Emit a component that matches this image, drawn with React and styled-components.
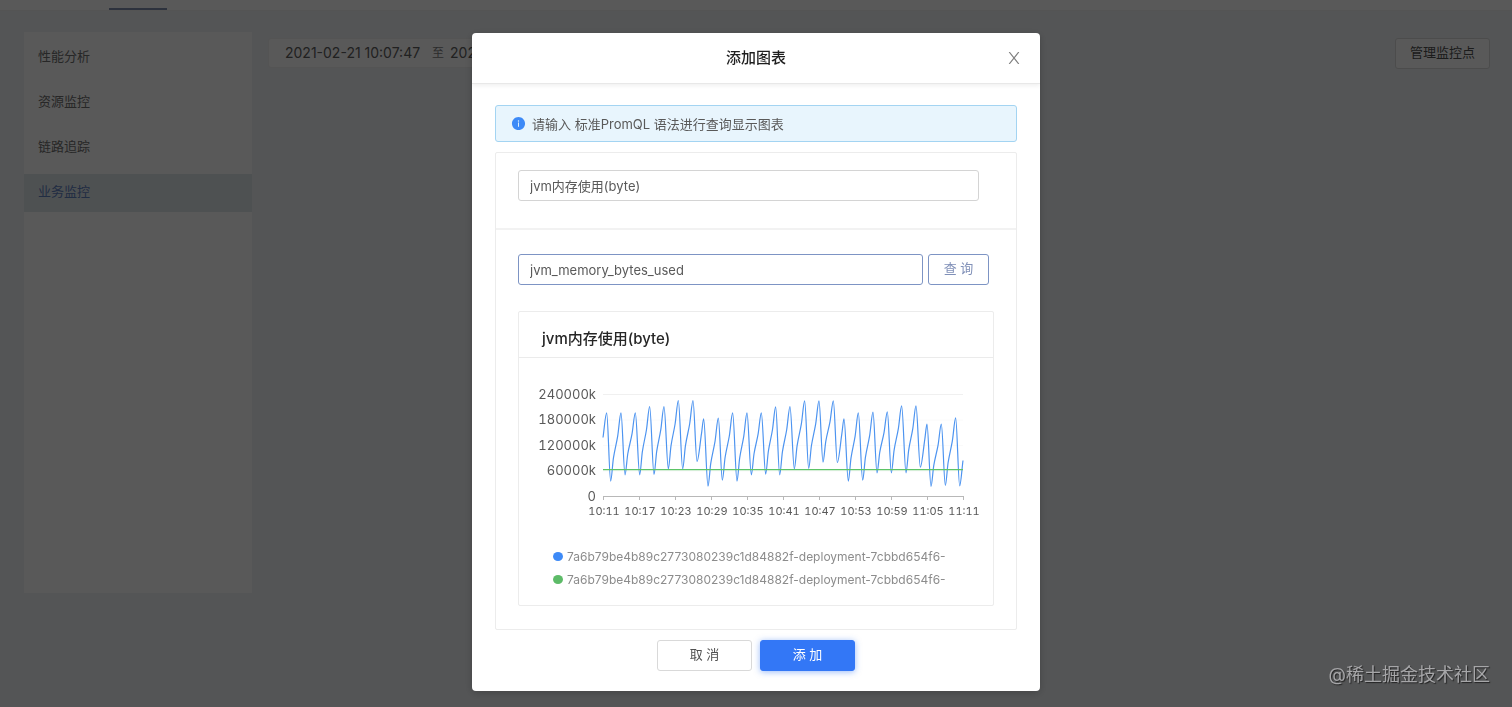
import React, { useState } from "react";
import styled, { createGlobalStyle } from "styled-components";
import { AiFillInfoCircle } from "react-icons/ai";

const GlobalStyle = createGlobalStyle`
  * {
    box-sizing: border-box;
  }

  body {
    margin: 0;
    background: #f0f2f5;
    color: #595959;
    font-family: Inter, "Noto Sans CJK SC", sans-serif;
    font-size: 13px;
    line-height: 20px;
  }

  button,
  input {
    font: inherit;
    color: inherit;
  }
`;

const TopBar = styled.header`
  display: flex;
  height: 11px;
  padding-left: 109px;
  background: #fff;
  border-bottom: 1px solid #f0f0f0;
`;

const ActiveTab = styled.div`
  width: 58px;
  border-bottom: 2px solid #8090b0;
`;

const Page = styled.div`
  display: flex;
  gap: 16px;
  padding: 21px 22px 0 24px;
`;

const Sidebar = styled.nav`
  display: flex;
  flex-direction: column;
  gap: 7px;
  flex: 0 0 228px;
  height: calc(100vh - 146px);
  padding-top: 7px;
  background: #fff;
`;

const MenuLink = styled.a`
  padding: 7px 14px 11px;
  color: ${(props) => (props.$active ? "#6080c0" : "#707070")};
  background: ${(props) => (props.$active ? "#e0e8ec" : "transparent")};
  text-decoration: none;
`;

const Toolbar = styled.div`
  display: flex;
  flex: 1;
  justify-content: space-between;
  align-items: flex-start;
  padding-top: 6px;
`;

const RangePicker = styled.div`
  display: flex;
  align-items: center;
  gap: 6px;
  height: 30px;
  padding: 0 16px;
  background: #fff;
  border: 1px solid #f0f0f0;
  border-radius: 3px;
  color: #808080;
  font-size: 12px;
`;

const DateInput = styled.input`
  width: 141px;
  padding: 0;
  border: 0;
  outline: none;
  background: none;
  color: #606060;
  font-size: 14px;
`;

const Button = styled.button`
  height: 31px;
  padding: 0 14px 3px;
  color: ${(props) => (props.$primary ? "#fff" : "#505050")};
  background: ${(props) => (props.$primary ? "#3377f6" : "#fff")};
  border: 1px solid ${(props) => (props.$primary ? "#3377f6" : "#d9d9d9")};
  border-radius: 3px;
  box-shadow: ${(props) => (props.$primary ? "0 1px 6px rgba(51, 119, 246, 0.5)" : "none")};
  cursor: pointer;
`;

const QueryButton = styled(Button)`
  flex: 0 0 61px;
  color: #8090b8;
  border-color: #7d94c4;
`;

const FooterButton = styled(Button)`
  width: 95px;
`;

const Mask = styled.div`
  position: fixed;
  inset: 0;
  display: flex;
  justify-content: center;
  align-items: flex-start;
  padding-top: 33px;
  overflow: auto;
  background: rgba(0, 0, 0, 0.65);
`;

const Dialog = styled.section`
  width: 568px;
  max-width: 100%;
  background: #fff;
  border-radius: 4px;
  box-shadow: 0 2px 8px rgba(0, 0, 0, 0.2);
`;

const DialogHeader = styled.header`
  display: grid;
  grid-template-columns: 40px 1fr 40px;
  align-items: center;
  height: 51px;
  padding: 0 6px;
  border-bottom: 1px solid #e8e8e8;
  box-shadow: 0 2px 4px rgba(0, 0, 0, 0.06);
`;

const DialogTitle = styled.h2`
  grid-column: 2;
  margin: 0;
  color: #1f1f1f;
  font-size: 15px;
  font-weight: 500;
  text-align: center;
`;

const CloseButton = styled.button`
  display: flex;
  justify-content: center;
  padding: 4px;
  background: none;
  border: 0;
  color: #808080;
  cursor: pointer;
`;

const DialogBody = styled.div`
  display: flex;
  flex-direction: column;
  gap: 10px;
  padding: 21px 23px 20px;
`;

const Alert = styled.div`
  display: flex;
  align-items: center;
  gap: 6px;
  height: 37px;
  padding: 0 15px;
  background: #e8f5fd;
  border: 1px solid #a3d4f2;
  border-radius: 3px;

  svg {
    color: #3d8af7;
    font-size: 15px;
  }
`;

const Card = styled.div`
  border: 1px solid #ececec;
  border-radius: 2px;
`;

const NameSection = styled.div`
  padding: 17px 37px 27px 22px;
  border-bottom: 2px solid #f2f2f2;
`;

const QuerySection = styled.div`
  padding: 24px 22px 23px;
`;

const QueryRow = styled.div`
  display: flex;
  gap: 5px;
  padding-right: 5px;
  margin-bottom: 26px;
`;

const TextInput = styled.input`
  flex: 1;
  width: 100%;
  min-width: 0;
  height: 31px;
  padding: 0 11px;
  background: #fff;
  border: 1px solid ${(props) => (props.$focused ? "#7d94c4" : "#d4d4d4")};
  border-radius: 3px;
  outline: none;
`;

const ChartHeader = styled.h3`
  margin: 0;
  padding: 17px 23px 8px;
  border-bottom: 1px solid #ebebeb;
  color: #262626;
  font-size: 15px;
  font-weight: 500;
`;

const ChartBody = styled.div`
  padding: 20px 10px 14px;
`;

const ChartSvg = styled.svg`
  display: block;
  width: 100%;
  height: auto;
  fill: #595959;
  font-variant-numeric: tabular-nums;
`;

const Legend = styled.ul`
  margin: 0;
  padding: 21px 0 0 24px;
  color: #8c8c8c;
  font-size: 12px;
  list-style: none;
`;

const LegendItem = styled.li`
  display: flex;
  align-items: center;
  gap: 4px;
  height: 23px;
  white-space: nowrap;

  &::before {
    content: "";
    width: 10px;
    height: 9px;
    border-radius: 50%;
    background: ${(props) => props.$color};
  }
`;

const DialogFooter = styled.footer`
  display: flex;
  justify-content: center;
  gap: 8px;
`;

const Watermark = styled.div`
  position: fixed;
  right: 22px;
  bottom: 20px;
  color: #a6a6a8;
  font-size: 18px;
  line-height: 24px;
  text-shadow: 1px 1px 1px #222;
`;

const menu = ["性能分析", "资源监控", "链路追踪", "业务监控"];

const yLabels = ["240000k", "180000k", "120000k", "60000k", "0"];

const xLabels = [
  "10:11", "10:17", "10:23", "10:29", "10:35", "10:41",
  "10:47", "10:53", "10:59", "11:05", "11:11",
];

// turning points of the heap curve, in thirds of a pixel from the plot's top left
const turns = [
  [0, 129], [11, 55], [23, 260], [54, 55], [66, 241], [97, 55], [110, 241],
  [140, 36], [153, 240], [183, 36], [196, 223], [226, 18], [239, 223],
  [270, 18], [282, 201], [302, 73], [315, 275], [346, 71], [358, 257],
  [389, 55], [402, 260], [432, 55], [445, 241], [475, 55], [488, 239],
  [518, 37], [530, 241], [561, 36], [574, 223], [605, 19], [617, 222],
  [648, 19], [660, 203], [691, 19], [703, 204], [723, 73], [736, 260],
  [766, 55], [779, 257], [810, 53], [822, 235], [853, 52], [865, 235],
  [896, 34], [909, 235], [939, 34], [952, 218], [972, 89], [984, 276],
  [1015, 89], [1027, 273], [1058, 70], [1070, 274], [1080, 198],
];

// each long climb bends twice, each drop is a single sweep
const buildPoints = () => {
  const points = [];
  turns.forEach(([x, y], i) => {
    points.push([x, y]);
    const next = turns[i + 1];
    if (!next || next[1] > y || next[0] - x < 15) return;
    const dx = next[0] - x;
    const dy = next[1] - y;
    if (dx > 25) points.push([x + dx * 0.27, y + dy * 0.34]);
    points.push([x + dx * 0.68, y + dy * 0.66]);
  });
  return points;
};

const buildPath = (points) => {
  const slope = (a, b) => (b[1] - a[1]) / (b[0] - a[0]);
  const tangents = points.map((p, i) => {
    if (i === 0) return slope(p, points[1]);
    if (i === points.length - 1) return slope(points[i - 1], p);
    const before = slope(points[i - 1], p);
    const after = slope(p, points[i + 1]);
    return before * after <= 0 ? 0 : (2 * before * after) / (before + after);
  });

  return points.reduce((path, p, i) => {
    if (i === 0) return `M${p[0]} ${p[1]}`;
    const prev = points[i - 1];
    const third = (p[0] - prev[0]) / 3;
    return `${path}C${prev[0] + third} ${prev[1] + tangents[i - 1] * third} ${p[0] - third} ${p[1] - tangents[i] * third} ${p[0]} ${p[1]}`;
  }, "");
};

const heapPath = buildPath(buildPoints());

function MemoryChart() {
  return (
    <ChartSvg viewBox="0 0 454 146" role="img" aria-label="jvm内存使用(byte)">
      {yLabels.map((label, i) => (
        <g key={label}>
          {i < 4 && (
            <line x1="74" x2="434" y1={16.5 + i * 25.5} y2={16.5 + i * 25.5} stroke={i ? "#fafafa" : "#f0f0f0"} />
          )}
          <text x="67" y={21 + Math.floor(i * 25.5)} textAnchor="end" fontSize="13">{label}</text>
        </g>
      ))}
      <line x1="74" x2="434" y1="118.5" y2="118.5" stroke="#b8b8b8" />
      {xLabels.map((label, i) => (
        <g key={label}>
          <line x1={74.5 + i * 36} x2={74.5 + i * 36} y1="118" y2="122" stroke="#b8b8b8" />
          <text x={75 + i * 36} y="137" textAnchor="middle" fontSize="11">{label}</text>
        </g>
      ))}
      <g transform="translate(74 16.5) scale(0.33333)">
        <path d={heapPath} fill="none" stroke="#4d94f0" strokeWidth="3.6" strokeLinejoin="round" />
      </g>
      <path d="M74 91.6H434" fill="none" stroke="#5cc466" strokeWidth="1.2" />
    </ChartSvg>
  );
}

export default function App() {
  const [name, setName] = useState("jvm内存使用(byte)");
  const [query, setQuery] = useState("jvm_memory_bytes_used");
  const [start, setStart] = useState("2021-02-21 10:07:47");
  const [end, setEnd] = useState("2021-02-21 11:07:47");

  return (
    <>
      <GlobalStyle />
      <TopBar>
        <ActiveTab />
      </TopBar>
      <Page>
        <Sidebar>
          {menu.map((item) => (
            <MenuLink key={item} href="#" $active={item === "业务监控"}>{item}</MenuLink>
          ))}
        </Sidebar>
        <Toolbar>
          <RangePicker>
            <DateInput aria-label="开始时间" value={start} onChange={(e) => setStart(e.target.value)} />
            至
            <DateInput aria-label="结束时间" value={end} onChange={(e) => setEnd(e.target.value)} />
          </RangePicker>
          <Button>管理监控点</Button>
        </Toolbar>
      </Page>

      <Mask>
        <Dialog role="dialog" aria-labelledby="dialog-title">
          <DialogHeader>
            <DialogTitle id="dialog-title">添加图表</DialogTitle>
            <CloseButton aria-label="关闭">
              <svg width="12" height="12" viewBox="0 0 12 12" fill="none" stroke="currentColor" strokeWidth="1.2">
                <path d="M1.2 0L10.8 12M10.8 0L1.2 12" />
              </svg>
            </CloseButton>
          </DialogHeader>
          <DialogBody>
            <Alert>
              <AiFillInfoCircle />
              <span>请输入 标准PromQL 语法进行查询显示图表</span>
            </Alert>
            <Card>
              <NameSection>
                <TextInput aria-label="图表名称" value={name} onChange={(e) => setName(e.target.value)} />
              </NameSection>
              <QuerySection>
                <QueryRow>
                  <TextInput
                    $focused
                    aria-label="查询语句"
                    value={query}
                    onChange={(e) => setQuery(e.target.value)}
                  />
                  <QueryButton>查 询</QueryButton>
                </QueryRow>
                <Card>
                  <ChartHeader>{name}</ChartHeader>
                  <ChartBody>
                    <MemoryChart />
                    <Legend>
                      <LegendItem $color="#3d8af7">7a6b79be4b89c2773080239c1d84882f-deployment-7cbbd654f6-</LegendItem>
                      <LegendItem $color="#5dbb68">7a6b79be4b89c2773080239c1d84882f-deployment-7cbbd654f6-</LegendItem>
                    </Legend>
                  </ChartBody>
                </Card>
              </QuerySection>
            </Card>
            <DialogFooter>
              <FooterButton>取 消</FooterButton>
              <FooterButton $primary>添 加</FooterButton>
            </DialogFooter>
          </DialogBody>
        </Dialog>
      </Mask>
      <Watermark>@稀土掘金技术社区</Watermark>
    </>
  );
}
